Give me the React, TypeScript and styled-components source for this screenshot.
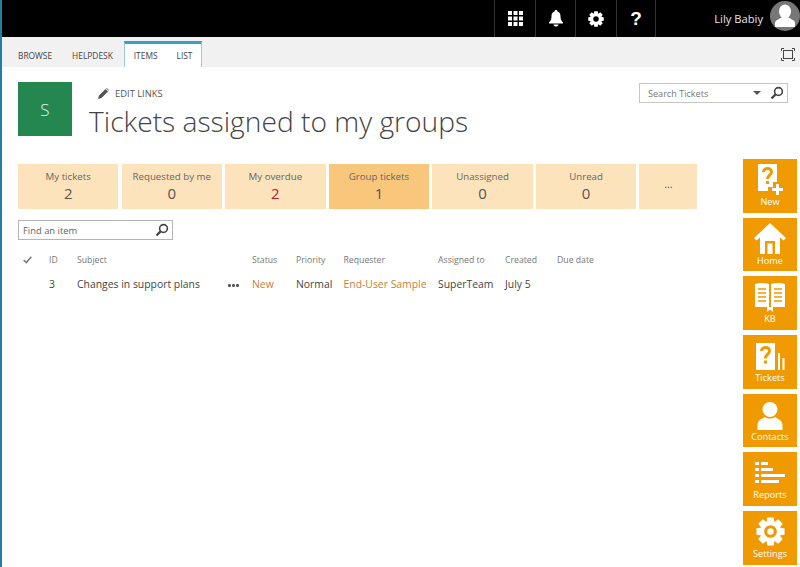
import React from "react";
import styled, { createGlobalStyle } from "styled-components";

const GlobalStyle = createGlobalStyle`
  html, body {
    margin: 0;
    padding: 0;
    height: 567px;
    overflow: hidden;
    background: white;
    font-family: "Open Sans", "Noto Sans", sans-serif;
    color: #444;
  }
  * { box-sizing: border-box; }
`;

const ORANGE = "#ee9a00";

const tabs = [
  { label: "My tickets", count: "2" },
  { label: "Requested by me", count: "0" },
  { label: "My overdue", count: "2", overdue: true },
  { label: "Group tickets", count: "1", active: true },
  { label: "Unassigned", count: "0" },
  { label: "Unread", count: "0" },
];

const columns = [
  { text: "ID", width: 28 },
  { text: "Subject", width: 175 },
  { text: "Status", width: 44 },
  { text: "Priority", width: 47.5 },
  { text: "Requester", width: 94.5 },
  { text: "Assigned to", width: 67 },
  { text: "Created", width: 52 },
  { text: "Due date", width: 60 },
];

function SearchIcon() {
  return (
    <svg width="14" height="14" viewBox="0 0 14 14">
      <circle cx="8.5" cy="5.5" r="3.9" fill="none" stroke="#444" strokeWidth="1.6" />
      <path d="M5.6 8.4 L1.5 12.5" stroke="#444" strokeWidth="2.2" />
    </svg>
  );
}

// gear drawn from eight rotated teeth, the hole colour depends on the background
function Gear({ size, hole, dot }: { size: number; hole: string; dot?: boolean }) {
  return (
    <svg width={size} height={size} viewBox="0 0 32 32">
      <circle cx="16" cy="16" r="11.5" fill="#fff" />
      {[0, 45, 90, 135, 180, 225, 270, 315].map((deg) => (
        <path key={deg} d="M12.5 0.5 H19.5 L20.5 7 H11.5 Z" fill="#fff" transform={`rotate(${deg} 16 16)`} />
      ))}
      <circle cx="16" cy="16" r={dot ? 7 : 5.5} fill={hole} />
      {dot && <circle cx="16" cy="16" r="3.5" fill="#fff" />}
    </svg>
  );
}

function TileIcon({ name }: { name: string }) {
  if (name === "New") {
    return (
      <svg width="28" height="31" viewBox="0 0 28 31">
        <path d="M2 0 H21 V18 H17 V23 H12 V27 H2 Z" fill="#fff" />
        <path d="M7.5 8 C7.5 3.5 15.5 3 15.5 8 C15.5 11.5 11.5 11 11.5 15" fill="none" stroke={ORANGE} strokeWidth="3" />
        <rect x="10" y="17" width="3" height="3" fill={ORANGE} />
        <path d="M20 20 H23 V24 H27 V27 H23 V31 H20 V27 H16 V24 H20 Z" fill="#fff" />
      </svg>
    );
  }
  if (name === "Home") {
    return (
      <svg width="32" height="31" viewBox="0 0 32 31">
        <path d="M16 0 L32 15 L29.5 17.5 L26 14.5 V31 H6 V14.5 L2.5 17.5 L0 15 Z" fill="#fff" />
        <path d="M11 18 H21 V31 H18.5 V20.5 H13.5 V31 H11 Z" fill={ORANGE} />
      </svg>
    );
  }
  if (name === "KB") {
    return (
      <svg width="30" height="31" viewBox="0 0 30 31">
        <path d="M0 3 C5 1.5 10 1.5 14 3 V26 H0 Z M16 3 C20 1.5 25 1.5 30 3 V26 H16 Z" fill="#fff" />
        <path d="M3 8 H11 M3 12 H11 M3 16 H11 M3 20 H11 M19 8 H27 M19 12 H27 M19 16 H27 M19 20 H27" stroke={ORANGE} strokeWidth="1.5" />
        <path d="M12 26 H18 V31 L15 28.5 L12 31 Z" fill="#fff" />
      </svg>
    );
  }
  if (name === "Tickets") {
    return (
      <svg width="29" height="31" viewBox="0 0 29 31">
        <path d="M0 3 H19 V30 H0 Z" fill="#fff" />
        <path d="M5.5 11 C5.5 6.5 13.5 6 13.5 11 C13.5 14.5 9.5 14 9.5 18.5" fill="none" stroke={ORANGE} strokeWidth="3" />
        <rect x="8" y="20.5" width="3" height="3" fill={ORANGE} />
        <path d="M22 13 H24 V30 H22 Z M26.5 18 H28.5 V30 H26.5 Z" fill="#fff" />
      </svg>
    );
  }
  if (name === "Contacts") {
    return (
      <svg width="26" height="31" viewBox="0 0 26 31">
        <ellipse cx="13" cy="10.5" rx="7.5" ry="7.5" fill="#fff" />
        <path d="M0.5 31 V26 C0.5 21.5 5 20 8 18 C10 20 16 20 18 18 C21 20 25.5 21.5 25.5 26 V31 Z" fill="#fff" />
      </svg>
    );
  }
  if (name === "Reports") {
    return (
      <svg width="30" height="31" viewBox="0 0 30 31">
        <path d="M0 5 H4 V8 H0 Z M6 5 H13 V8 H6 Z M0 11 H4 V14 H0 Z M6 11 H18 V14 H6 Z M0 17 H4 V20 H0 Z M6 17 H30 V20 H6 Z M0 23 H4 V26 H0 Z M6 23 H24 V26 H6 Z" fill="#fff" />
      </svg>
    );
  }
  return <Gear size={29} hole={ORANGE} dot />;
}

export default function App() {
  return (
    <>
      <GlobalStyle />
      <Page>
        <TopBar>
          <IconCell>
            <svg width="15" height="15" viewBox="0 0 15 15" fill="#fff">
              {[0, 5.5, 11].flatMap((y) =>
                [0, 5.5, 11].map((x) => <rect key={`${x}-${y}`} x={x} y={y} width="4" height="4" />),
              )}
            </svg>
          </IconCell>
          <IconCell>
            <svg width="14" height="17" viewBox="0 0 14 17" fill="#fff">
              <path d="M7 0 C8 0 8.5 .7 8.5 1.4 C10.8 2 11.5 4 11.5 6.5 C11.5 9.5 12.5 11 14 12.5 V13.5 H0 V12.5 C1.5 11 2.5 9.5 2.5 6.5 C2.5 4 3.2 2 5.5 1.4 C5.5 .7 6 0 7 0 Z" />
              <path d="M4.5 14.5 H9.5 C9.2 16 8.2 16.5 7 16.5 C5.8 16.5 4.8 16 4.5 14.5 Z" />
            </svg>
          </IconCell>
          <IconCell>
            <Gear size={16} hole="#000" />
          </IconCell>
          <IconCell $last>
            <HelpMark>?</HelpMark>
          </IconCell>
          <UserName>Lily Babiy</UserName>
          <Avatar>
            <svg width="30" height="30" viewBox="0 0 30 30" fill="#fff">
              <ellipse cx="15" cy="10.5" rx="6" ry="7" />
              <path d="M5 26 V22 C5 19 10 18 12 16 H18 C20 18 25 19 25 22 V26 Z" />
            </svg>
          </Avatar>
        </TopBar>

        <Ribbon>
          <RibbonTab>BROWSE</RibbonTab>
          <RibbonTab>HELPDESK</RibbonTab>
          <ContextGroup>
            <RibbonTab>ITEMS</RibbonTab>
            <RibbonTab>LIST</RibbonTab>
          </ContextGroup>
          <FocusButton>
            <svg width="14" height="13" viewBox="0 0 14 13" fill="none" stroke="#444">
              <rect x="2.5" y="2.5" width="9" height="8" strokeWidth="1" />
              <path d="M.5 3 V.5 H3 M11 .5 H13.5 V3 M.5 10 V12.5 H3 M11 12.5 H13.5 V10" strokeWidth="1" />
            </svg>
          </FocusButton>
        </Ribbon>

        <Header>
          <SiteLogo>S</SiteLogo>
          <TitleBlock>
            <EditLinks>
              <svg width="11" height="11" viewBox="0 0 11 11" fill="#555">
                <path d="M0 11 L1 7.5 L7.5 1 L10 3.5 L3.5 10 Z M8.2 .4 L8.8 0 L11 2.2 L10.6 2.8 Z" />
              </svg>
              EDIT LINKS
            </EditLinks>
            <Title>Tickets assigned to my groups</Title>
          </TitleBlock>
          <SearchBox>
            <SearchLabel>Search Tickets</SearchLabel>
            <Caret />
            <SearchIcon />
          </SearchBox>
        </Header>

        <Body>
          <Main>
            <TabRow>
              {tabs.map((tab) => (
                <FilterTab key={tab.label} $active={tab.active}>
                  <TabLabel>{tab.label}</TabLabel>
                  <TabCount $overdue={tab.overdue}>{tab.count}</TabCount>
                </FilterTab>
              ))}
              <MoreTab>...</MoreTab>
            </TabRow>

            <FindBox>
              <span>Find an item</span>
              <SearchIcon />
            </FindBox>

            <HeadRow>
              <CheckCell>
                <svg width="9" height="8" viewBox="0 0 9 8" fill="none" stroke="#777" strokeWidth="1.5">
                  <path d="M.7 4 L3.3 6.6 L8.3 .8" />
                </svg>
              </CheckCell>
              {columns.map((col) => (
                <HeadCell key={col.text} $width={col.width}>
                  {col.text}
                </HeadCell>
              ))}
            </HeadRow>

            <DataRow>
              <CheckCell />
              <DataCell $width={28}>3</DataCell>
              <SubjectCell $width={175}>
                Changes in support plans
                <Dots>
                  <i />
                  <i />
                  <i />
                </Dots>
              </SubjectCell>
              <DataCell $width={44}>
                <AccentText>New</AccentText>
              </DataCell>
              <DataCell $width={47.5}>Normal</DataCell>
              <DataCell $width={94.5}>
                <AccentText>End-User Sample</AccentText>
              </DataCell>
              <DataCell $width={67}>SuperTeam</DataCell>
              <DataCell $width={52}>July 5</DataCell>
            </DataRow>
          </Main>

          <Sidebar>
            {["New", "Home", "KB", "Tickets", "Contacts", "Reports", "Settings"].map((name) => (
              <Tile key={name}>
                <IconSlot>
                  <TileIcon name={name} />
                </IconSlot>
                <TileLabel>{name}</TileLabel>
              </Tile>
            ))}
          </Sidebar>
        </Body>
      </Page>
    </>
  );
}

const Page = styled.div`
  width: 800px;
  height: 567px;
  display: flex;
  flex-direction: column;
  border-left: 2px solid #1f7fa8;
  overflow: hidden;
`;

const TopBar = styled.div`
  height: 37px;
  margin-left: -2px;
  background: #000;
  display: flex;
  justify-content: flex-end;
  align-items: stretch;
  flex-shrink: 0;
`;

const IconCell = styled.div<{ $last?: boolean }>`
  width: 40.5px;
  display: flex;
  align-items: center;
  justify-content: center;
  border-left: 1px solid #333;
  border-right: ${(props) => (props.$last ? "1px solid #333" : "none")};
  margin-right: ${(props) => (props.$last ? "58px" : "0")};
`;

const HelpMark = styled.span`
  color: #fff;
  font-size: 19px;
  font-weight: 700;
  font-family: "Liberation Sans", sans-serif;
`;

const UserName = styled.div`
  align-self: center;
  color: #e6e6e6;
  font-size: 11.2px;
  margin-right: 7px;
`;

const Avatar = styled.div`
  width: 30px;
  height: 30px;
  margin-top: 1px;
  border-radius: 50%;
  background: #777;
  overflow: hidden;
  flex-shrink: 0;
`;

const Ribbon = styled.div`
  height: 30px;
  background: #f1f1f1;
  display: flex;
  align-items: stretch;
  padding-left: 16px;
  flex-shrink: 0;
`;

const RibbonTab = styled.div`
  display: flex;
  align-items: center;
  padding-top: 6px;
  margin-right: 20px;
  font-size: 8.4px;
  color: #444;
  &:last-child { margin-right: 0; }
`;

const ContextGroup = styled.div`
  margin-top: 4px;
  margin-left: -9px;
  padding: 0 9px;
  height: 26px;
  display: flex;
  background: #fff;
  border: 1px solid #9ccbdd;
  border-top: 3px solid #3aa0c4;
  border-bottom: none;
  & > div { padding-top: 0; margin-right: 19px; }
  & > div:last-child { margin-right: 0; }
`;

const FocusButton = styled.div`
  margin-left: auto;
  margin-right: 5px;
  display: flex;
  align-items: center;
  padding-top: 4px;
`;

const Header = styled.div`
  height: 92px;
  flex-shrink: 0;
  display: flex;
  padding: 15px 12px 0 16px;
`;

const SiteLogo = styled.div`
  width: 54px;
  height: 54px;
  background: #23874f;
  color: #e9f3ec;
  font-size: 17px;
  font-weight: 300;
  display: flex;
  align-items: center;
  justify-content: center;
`;

const TitleBlock = styled.div`
  margin-left: 17px;
  flex: 1;
`;

const EditLinks = styled.div`
  display: flex;
  align-items: center;
  gap: 6px;
  margin: 5px 0 0 9px;
  font-size: 9.4px;
  color: #555;
`;

const Title = styled.div`
  margin-top: 2px;
  font-size: 28.2px;
  font-weight: 300;
  color: #444;
  line-height: 38px;
  white-space: nowrap;
`;

const SearchBox = styled.div`
  margin-top: 1px;
  width: 149px;
  height: 20px;
  border: 1px solid #c6c6c6;
  padding: 0 3px 0 8px;
  display: flex;
  align-items: center;
`;

const SearchLabel = styled.span`
  flex: 1;
  font-size: 9.1px;
  color: #777;
`;

const Caret = styled.i`
  width: 0;
  height: 0;
  margin-right: 9px;
  border-left: 4px solid transparent;
  border-right: 4px solid transparent;
  border-top: 4px solid #555;
`;

const Body = styled.div`
  flex: 1;
  display: flex;
  min-height: 0;
`;

const Main = styled.div`
  flex: 1;
  min-width: 0;
  padding: 5px 0 0 16px;
  display: flex;
  flex-direction: column;
`;

const TabRow = styled.div`
  display: flex;
  gap: 3.2px;
  height: 45px;
`;

const FilterTab = styled.div<{ $active?: boolean }>`
  width: 100.4px;
  background: ${(props) => (props.$active ? "#f9c77c" : "#fde3bb")};
  display: flex;
  flex-direction: column;
  align-items: center;
  padding-top: 5px;
`;

const TabLabel = styled.div`
  font-size: 9.7px;
  line-height: 15px;
  color: #666;
`;

const TabCount = styled.div<{ $overdue?: boolean }>`
  font-size: 15px;
  line-height: 18px;
  color: ${(props) => (props.$overdue ? "#b8201f" : "#555")};
`;

const MoreTab = styled.div`
  width: 58px;
  background: #fde3bb;
  display: flex;
  align-items: center;
  justify-content: center;
  font-size: 10.5px;
  color: #555;
  padding-bottom: 5px;
`;

const FindBox = styled.div`
  margin-top: 11px;
  width: 155px;
  height: 20px;
  border: 1px solid #b5b5b5;
  display: flex;
  align-items: center;
  justify-content: space-between;
  padding: 0 3px 0 4px;
  font-size: 9.4px;
  color: #666;
`;

const HeadRow = styled.div`
  margin-top: 10px;
  height: 20px;
  display: flex;
  align-items: center;
`;

const CheckCell = styled.div`
  width: 31px;
  padding-left: 5px;
  display: flex;
  align-items: center;
  flex-shrink: 0;
`;

const HeadCell = styled.div<{ $width: number }>`
  width: ${(props) => props.$width}px;
  flex-shrink: 0;
  font-size: 8.7px;
  color: #777;
  white-space: nowrap;
`;

const DataRow = styled.div`
  margin-top: 2px;
  height: 24px;
  display: flex;
  align-items: center;
`;

const DataCell = styled.div<{ $width: number }>`
  width: ${(props) => props.$width}px;
  flex-shrink: 0;
  font-size: 10.4px;
  color: #444;
  white-space: nowrap;
`;

const SubjectCell = styled(DataCell)`
  display: flex;
  align-items: center;
  position: relative;
`;

const Dots = styled.span`
  position: absolute;
  left: 151px;
  top: 7px;
  display: flex;
  gap: 1.5px;
  i {
    width: 2.5px;
    height: 2.5px;
    border-radius: 50%;
    background: #555;
  }
`;

const AccentText = styled.span`
  color: #c67f3c;
`;

const Sidebar = styled.div`
  width: 57px;
  display: flex;
  flex-direction: column;
  gap: 5px;
  flex-shrink: 0;
`;

const Tile = styled.div`
  width: 54px;
  height: 53.67px;
  flex-shrink: 0;
  background: ${ORANGE};
  display: flex;
  flex-direction: column;
  align-items: center;
  padding-top: 5px;
`;

const IconSlot = styled.div`
  height: 31px;
  display: flex;
  align-items: center;
  justify-content: center;
`;

const TileLabel = styled.div`
  color: #fff;
  font-size: 9.2px;
  line-height: 11px;
  margin-top: 1px;
`;
